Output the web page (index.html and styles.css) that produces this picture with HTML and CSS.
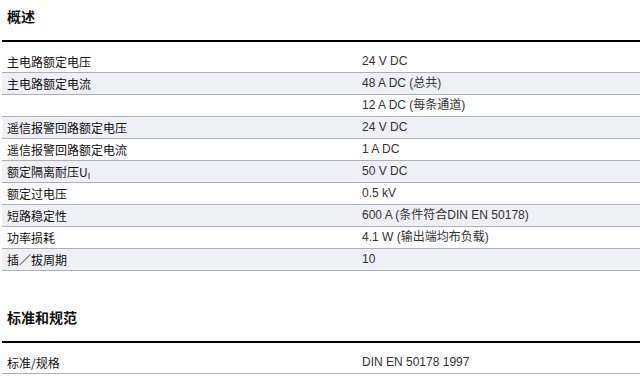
FILE: index.html
```html
<!DOCTYPE html>
<html lang="zh-CN">
<head>
<meta charset="utf-8">
<title>概述</title>
<link rel="stylesheet" href="styles.css">
</head>
<body>
<section class="section">
  <h2 class="section-title">概述</h2>
  <table class="spec">
    <tr class="first"><td class="label">主电路额定电压</td><td class="value">24 V DC</td></tr>
    <tr class="alt"><td class="label">主电路额定电流</td><td class="value">48 A DC (总共)</td></tr>
    <tr><td class="label"></td><td class="value">12 A DC (每条通道)</td></tr>
    <tr class="alt"><td class="label">遥信报警回路额定电压</td><td class="value">24 V DC</td></tr>
    <tr><td class="label">遥信报警回路额定电流</td><td class="value">1 A DC</td></tr>
    <tr class="alt"><td class="label">额定隔离耐压U<sub class="sub">I</sub></td><td class="value">50 V DC</td></tr>
    <tr><td class="label">额定过电压</td><td class="value">0.5 kV</td></tr>
    <tr class="alt"><td class="label">短路稳定性</td><td class="value">600 A (条件符合DIN EN 50178)</td></tr>
    <tr><td class="label">功率损耗</td><td class="value">4.1 W (输出端均布负载)</td></tr>
    <tr class="alt"><td class="label">插／拔周期</td><td class="value">10</td></tr>
  </table>
</section>
<section class="section">
  <h2 class="section-title">标准和规范</h2>
  <table class="spec">
    <tr class="first"><td class="label">标准/规格</td><td class="value">DIN EN 50178 1997</td></tr>
  </table>
</section>
</body>
</html>
```

FILE: styles.css
```css
html, body {
  margin: 0;
  padding: 0;
  background: #ffffff;
}

body {
  font-family: "Liberation Sans", "Noto Sans CJK SC", sans-serif;
  font-size: 12px;
  color: #222;
}

.section {
  margin: 0 0 0 2px;
}

.section + .section {
  margin-top: 30px;
}

.section-title {
  margin: 0;
  height: 24px;
  padding: 8px 0 8px 5px;
  font-family: "Noto Sans CJK SC", sans-serif;
  font-size: 14px;
  line-height: 16px;
  font-weight: bold;
  color: #111;
  border-bottom: 2px solid #000;
}

.spec {
  width: 100%;
  border-collapse: collapse;
}

.spec td {
  height: 21px;
  padding: 0;
  line-height: 21px;
  border-bottom: 1px solid #a9b0b8;
  vertical-align: middle;
  white-space: nowrap;
}

.spec tr.first td {
  padding-top: 9px;
}

.spec tr.alt td {
  background: #eef0f4;
}

.label {
  width: 355px;
  padding-left: 5px !important;
  font-family: "Noto Sans CJK SC", sans-serif;
  color: #111;
}

.value {
  font-family: "Liberation Sans", "Noto Sans CJK SC", sans-serif;
  color: #333;
}

.sub {
  font-family: "Liberation Sans", sans-serif;
  font-size: 9px;
  line-height: 0;
  vertical-align: -2px;
}
```
